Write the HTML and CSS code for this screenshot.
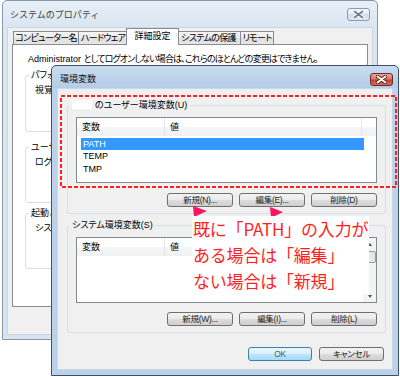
FILE: index.html
```html
<!DOCTYPE html>
<html lang="ja">
<head>
<meta charset="utf-8">
<title>環境変数</title>
<link rel="stylesheet" href="styles.css">
</head>
<body>
<section class="win win-back">
  <header class="tbar">
    <span class="ttl">システムのプロパティ</span>
    <span class="xbtn xbtn-off"><svg width="11" height="9" viewBox="0 0 11 9"><path d="M1.5 1.5 L9.5 7.5 M9.5 1.5 L1.5 7.5" stroke="#fff" stroke-width="3.6" stroke-linecap="round"/><path d="M1.5 1.5 L9.5 7.5 M9.5 1.5 L1.5 7.5" stroke="#6b7c90" stroke-width="1.8" stroke-linecap="round"/></svg></span>
  </header>
  <div class="client">
    <ul class="tabs">
      <li class="tab t-comp">コンピューター名</li>
      <li class="tab t-hw">ハードウェア</li>
      <li class="tab t-adv on">詳細設定</li>
      <li class="tab t-prot">システムの保護</li>
      <li class="tab t-rem">リモート</li>
    </ul>
    <div class="page">
      <p class="note">Administrator <span class="ja">としてログオンしない場合は、これらのほとんどの変更はできません。</span></p>
      <fieldset class="grp g1"><legend>パフォーマンス</legend><p>視覚効果、プロセッサのスケジュール、メモリ使用、および仮想メモリ</p></fieldset>
      <fieldset class="grp g2"><legend>ユーザー プロファイル</legend><p>ログオンに関連したデスクトップ設定</p></fieldset>
      <fieldset class="grp g3"><legend>起動と回復</legend><p>システム起動、システム障害、およびデバッグ情報</p></fieldset>
    </div>
  </div>
</section>

<section class="win win-front">
  <header class="tbar">
    <span class="ttl">環境変数</span>
    <span class="xbtn xbtn-on"><svg width="11" height="9" viewBox="0 0 11 9"><path d="M1.5 1.5 L9.5 7.5 M9.5 1.5 L1.5 7.5" stroke="#5a1f1a" stroke-width="3.6" stroke-linecap="round"/><path d="M1.5 1.5 L9.5 7.5 M9.5 1.5 L1.5 7.5" stroke="#fff" stroke-width="1.9" stroke-linecap="round"/></svg></span>
  </header>
  <div class="client">
    <fieldset class="grp ugrp">
      <legend><span class="mask"></span>のユーザー環境変数(U)</legend>
      <div class="list">
        <div class="lhead uhead"><span>変数</span><span>値</span><span></span></div>
        <ul class="rows">
          <li class="sel">PATH</li>
          <li>TEMP</li>
          <li>TMP</li>
        </ul>
      </div>
      <div class="btns"><span class="btn">新規(N)...</span><span class="btn">編集(E)...</span><span class="btn">削除(D)</span></div>
    </fieldset>
    <fieldset class="grp sgrp">
      <legend>システム環境変数(S)</legend>
      <div class="list slist">
        <div class="lmain">
          <div class="lhead shead"><span>変数</span><span>値</span></div>
        </div>
        <div class="sbar">
          <span class="arr"><i class="up"></i></span>
          <span class="thumb"></span>
          <span class="track"></span>
          <span class="arr"><i class="down"></i></span>
        </div>
      </div>
      <div class="btns"><span class="btn">新規(W)...</span><span class="btn">編集(I)...</span><span class="btn">削除(L)</span></div>
    </fieldset>
    <div class="dlgbtns"><span class="btn def">OK</span><span class="btn">キャンセル</span></div>
  </div>
</section>

<svg class="marks" width="400" height="377" viewBox="0 0 400 377">
  <rect x="61" y="96" width="335" height="91" fill="none" stroke="#ff2020" stroke-width="2" stroke-dasharray="4 2"/>
  <polygon points="193,206 207,211 194,217" fill="#ff1464"/>
  <polygon points="270,207 283,212 271,218" fill="#ff1464"/>
</svg>

<div class="callout">
  <p>既に「PATH」の入力が</p>
  <p>ある場合は「編集」</p>
  <p>ない場合は「新規」</p>
</div>
</body>
</html>
```

FILE: styles.css
```css
* { box-sizing: border-box; }
html, body { margin: 0; padding: 0; }
body {
  width: 400px;
  height: 377px;
  overflow: hidden;
  position: relative;
  background: #fff;
  font-family: "Liberation Sans", "Noto Sans CJK JP", sans-serif;
  font-size: 9px;
  line-height: 12px;
  color: #000;
  font-feature-settings: "palt" 1;
}
p { margin: 0; }

/* windows */
.win {
  position: absolute;
  display: flex;
  flex-direction: column;
}
.tbar {
  display: flex;
  align-items: center;
  flex: none;
}
.ttl {
  flex: 1;
  font-family: "Noto Sans CJK JP", sans-serif;
  font-feature-settings: normal;
  font-size: 9px;
  white-space: nowrap;
}
.xbtn {
  width: 23px;
  height: 13px;
  border-radius: 3px;
  display: flex;
  align-items: center;
  justify-content: center;
  flex: none;
}
.xbtn svg { display: block; }
.xbtn-off {
  border: 1px solid #8d9bb0;
  background: linear-gradient(#f4f7fb, #e3eaf3 50%, #d4dee9 50%, #dfe7f0);
}
.xbtn-on {
  border: 1px solid #6e2a24;
  background: linear-gradient(#e9a99c, #d47766 45%, #c2432f 55%, #d0705a);
}
.client {
  flex: 1;
  background: #f0f0f0;
  border: 1px solid #c8d6e6;
}

/* back window */
.win-back {
  left: 2px;
  top: 0;
  width: 376px;
  height: 340px;
  border: 1px solid #8797aa;
  border-radius: 5px 5px 0 0;
  background: linear-gradient(#e8eff7, #dbe6f1 26px, #d9e4f0);
}
.win-back .tbar {
  height: 26px;
  padding: 1px 7px 0 7px;
}
.win-back .ttl { color: #3f3f3f; }
.win-back .client {
  margin: 0 4px 4px 4px;
  padding: 0 4px;
}
.tabs {
  list-style: none;
  margin: 0;
  padding: 0 0 0 1px;
  height: 17px;
  display: flex;
  align-items: flex-end;
  position: relative;
  z-index: 1;
}
.tab {
  flex: none;
  height: 13px;
  margin-bottom: 1px;
  border: 1px solid #898c95;
  border-bottom: 0;
  border-left-width: 0;
  background: linear-gradient(#f4f4f4, #ececec 50%, #dfdfdf 50%, #e6e6e6);
  line-height: 12px;
  white-space: nowrap;
  text-align: center;
  letter-spacing: -0.7px;
}
.tab:first-child { border-left-width: 1px; }
.t-comp { width: 66px; }
.t-hw { width: 49px; }
.t-adv { width: 53px; }
.t-prot { width: 64px; }
.t-rem { width: 33px; }
.tab.on {
  height: 17px;
  margin: 0 -2px 0 -2px;
  border-left-width: 1px;
  background: #fff;
  line-height: 15px;
  position: relative;
  letter-spacing: 0;
}
.page {
  height: 263px;
  margin-top: -1px;
  border: 1px solid #898c95;
  background: #fff;
  padding: 8px 12px 0 12px;
  overflow: hidden;
}
.note {
  padding-left: 3px;
  white-space: nowrap;
}
.note .ja { letter-spacing: -0.85px; }

.grp {
  margin: 0;
  min-width: 0;
  border: 1px solid #d5dfe5;
  border-radius: 3px;
}
.grp legend {
  padding: 0 2px;
  line-height: 12px;
  white-space: nowrap;
}
.page .grp { padding: 0 9px; }
.page .grp legend { margin-left: -6px; }
.page .grp p {
  margin-top: 3px;
  white-space: nowrap;
}
.g1 { margin-top: 4px; height: 63px; }
.g2 { margin-top: 9px; height: 62px; }
.g3 { margin-top: 4px; height: 62px; }

/* front dialog */
.win-front {
  left: 51px;
  top: 65px;
  width: 348px;
  height: 311px;
  border: 1px solid #3d5066;
  border-radius: 5px 5px 0 0;
  background: linear-gradient(#c9dbef, #b4cce8 22px, #bcd2eb 22px);
}
.win-front .tbar {
  height: 22px;
  padding: 4px 5px 0 8px;
}
.win-front .ttl { color: #101010; }
.win-front .client {
  margin: 0 5px 5px 5px;
  display: flex;
  flex-direction: column;
}
.ugrp, .sgrp {
  padding: 6px 8px;
  margin: 0 6px 0 9px;
}
.ugrp { margin-top: 10px; }
.sgrp { margin-top: 5px; }
.ugrp legend, .sgrp legend { margin-left: -6px; }
.mask {
  display: inline-block;
  width: 20px;
  height: 9px;
  background: #fff;
  margin-right: 3px;
  vertical-align: -1px;
}

.list {
  height: 66px;
  border: 1px solid #828790;
  background: #fff;
}
.lhead {
  height: 18px;
  display: grid;
  background: linear-gradient(#ffffff, #ffffff 50%, #f5f6f7 50%, #eff1f3);
  line-height: 18px;
}
.lhead span {
  padding-left: 5px;
  border-right: 1px solid #e3e5e8;
}
.uhead { grid-template-columns: 88px 197px 1fr; }
.uhead span:last-child { border-right: 0; }
.shead { grid-template-columns: 88px 1fr; }
.shead span:last-child { border-right: 0; }
.rows {
  list-style: none;
  margin: 0;
  padding: 1.5px 12px 0 4px;
}
.rows li {
  height: 12.5px;
  line-height: 12.5px;
  padding-left: 2px;
}
.rows li.sel {
  background: #3399ff;
  color: #fff;
}

.slist { display: flex; }
.lmain { flex: 1; }
.sbar {
  width: 13px;
  flex: none;
  display: flex;
  flex-direction: column;
  background: #f3f3f3;
}
.arr {
  height: 12px;
  display: flex;
  align-items: center;
  justify-content: center;
  flex: none;
}
.arr i {
  width: 0;
  height: 0;
  border-left: 2.5px solid transparent;
  border-right: 2.5px solid transparent;
}
.arr .up { border-bottom: 3px solid #555; }
.arr .down { border-top: 3px solid #555; }
.thumb {
  height: 12px;
  margin: 1px 0 0 0;
  border: 1px solid #9b9b9b;
  border-radius: 2px;
  background: linear-gradient(90deg, #f3f3f3, #e2e2e2);
  flex: none;
}
.track { flex: 1; }

.btns {
  display: flex;
  justify-content: flex-end;
  gap: 6px;
}
.ugrp .btns { margin-top: 10px; }
.sgrp .btns { margin-top: 9px; }
.btn {
  width: 66px;
  height: 14px;
  border: 1px solid #707070;
  border-radius: 3px;
  background: linear-gradient(#f2f2f2, #ebebeb 50%, #dddddd 50%, #cfcfcf);
  display: flex;
  align-items: center;
  justify-content: center;
  font-size: 8.5px;
  line-height: 12px;
  white-space: nowrap;
  color: #222;
  letter-spacing: -0.3px;
}
.dlgbtns {
  display: flex;
  justify-content: flex-end;
  gap: 7px;
  margin: 14px 8px 0 0;
}
.dlgbtns .btn { width: 65px; }
.dlgbtns .btn.def {
  width: 64px;
  border-color: #3c7fb1;
  background: linear-gradient(#eaf6fd, #d9f0fc 50%, #bee6fd 50%, #a7d9f5);
  color: #555;
}

/* annotation overlay */
.marks {
  position: absolute;
  left: 0;
  top: 0;
  pointer-events: none;
}
.callout {
  position: absolute;
  left: 192px;
  top: 216px;
  width: 177px;
  padding-left: 1px;
  background: #fff;
  font-family: "Noto Sans CJK JP", sans-serif;
  font-feature-settings: normal;
  font-size: 17px;
  line-height: 26px;
  letter-spacing: -0.2px;
  color: #ff1f1f;
  white-space: nowrap;
}
```
